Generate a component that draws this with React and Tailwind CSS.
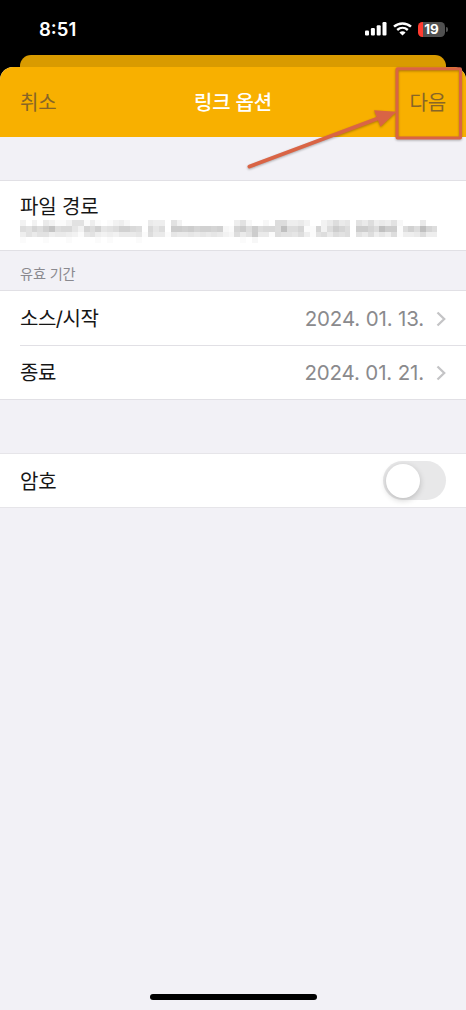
// Each digit is one cell of the blurred-out path: 0 is blank, f is darkest
const MOSAIC_ROWS = [
  '3030531137 7141013420 0054407300 0000000472 0020884453 0035856075 8454720005 00',
  '87a8be8996 3a8b678bb9 809680ccbc abbab21ac8 c8998f88a1 1a38ca80cc a8fcc18b8f a8',
  '4757745543 1674343555 6185516556 5656532857 c551877684 1785878075 8464814458 44',
  '1000100010 0001010000 1000000000 0000000010 2000000000 0000000000 0000000000 00',
];

function Mosaic() {
  return (
    <div className="flex h-[24px] w-[418px] flex-col">
      {MOSAIC_ROWS.map((row, y) => (
        <div key={y} className="flex h-[5.8px] shrink-0">
          {row.replaceAll(' ', '').split('').map((cell, x) => {
            const v = Math.round(255 - parseInt(cell, 16) * 4.2);
            return <span key={x} className="h-full w-[5.8px] shrink-0" style={{ backgroundColor: `rgb(${v},${v},${v})` }} />;
          })}
        </div>
      ))}
    </div>
  );
}

function StatusBar() {
  return (
    <div className="flex h-[55px] shrink-0 items-start justify-between pl-[39px] pr-[18px] pt-[19px] text-white">
      <span className="text-[18.5px] font-semibold leading-[20px] tracking-normal">8:51</span>
      <div className="flex h-[20px] items-center">
        <svg width="22" height="14" viewBox="0 0 22 14" fill="#fff" className="mr-[6px]">
          <rect x="0" y="8.6" width="4" height="5" rx="1.1" />
          <rect x="5.9" y="6.1" width="4" height="7.5" rx="1.1" />
          <rect x="11.7" y="3.2" width="4" height="10.4" rx="1.1" />
          <rect x="17.5" y="0.1" width="4" height="13.5" rx="1.1" />
        </svg>
        <svg width="19" height="14" viewBox="0 0 19 14" fill="none" stroke="#fff" className="mr-[6px]">
          <path d="M1 4.7C5.8 0.3 13.2 0.3 18 4.7" strokeWidth="2.5" />
          <path d="M4.2 8C7.3 5.2 11.7 5.2 14.8 8" strokeWidth="2.4" />
          <path d="M9.5 13.6L6.4 10.4C8.2 8.9 10.8 8.9 12.6 10.4Z" fill="#fff" stroke="none" />
        </svg>
        <div className="flex h-[15px] w-[27px] items-center justify-center overflow-hidden rounded-[4.5px] bg-linear-to-r from-[#ff3b30] from-[20%] to-[#505050] to-[20%]">
          <span className="text-[13.5px] font-bold leading-[15px]">19</span>
        </div>
        <span className="ml-px h-[5px] w-[2px] rounded-r-full bg-[#505050]" />
      </div>
    </div>
  );
}

function DateRow({ label, value }) {
  return (
    <div className="flex flex-1 items-center justify-between pt-[2px]">
      <span className="tracking-[-0.5px]">{label}</span>
      <div className="flex items-center pr-[20px]">
        <span className="text-[20.5px] tracking-[-0.15px] text-[#8a8a8d]">{value}</span>
        <svg width="10" height="16" viewBox="0 0 10 16" fill="none" className="ml-[12px]">
          <path d="M1.5 1.5L8.2 8L1.5 14.5" stroke="#c4c4c6" strokeWidth="2.3" />
        </svg>
      </div>
    </div>
  );
}

// Callout drawn over the "next" button
function Callout() {
  return (
    <svg
      width="466"
      height="180"
      viewBox="0 0 466 180"
      className="pointer-events-none absolute left-0 top-0 drop-shadow-[0_1px_1px_rgba(0,0,0,0.3)]"
    >
      <rect x="397" y="68.8" width="63.5" height="69.2" rx="0.5" fill="none" stroke="#d96445" strokeWidth="3" />
      <path d="M249.5 166.5L379 118" stroke="#d96445" strokeWidth="4" strokeLinecap="round" />
      <path d="M374 110.3L396.5 111.8L380.5 126.7Z" fill="#d96445" />
    </svg>
  );
}

export default function App() {
  return (
    <div className="relative flex h-[1010px] w-[466px] flex-col overflow-hidden bg-black font-['Inter','Noto_Sans_CJK_KR',sans-serif] text-[20px] leading-[28px] tracking-[-0.15px] text-[#161616]">
      <StatusBar />
      <div className="mx-[20px] h-[12px] shrink-0 rounded-t-[11px] bg-[#d99b00]" />

      <div className="flex flex-1 flex-col overflow-hidden rounded-t-[13px] bg-[#f2f1f6]">
        <header className="grid h-[70px] shrink-0 grid-cols-3 items-center bg-[#f8b000] px-[20px] pt-[2px]">
          <span className="text-[#876527]">취소</span>
          <span className="text-center font-medium text-white">링크 옵션</span>
          <span className="text-right text-[#876527]">다음</span>
        </header>

        <section className="mt-[43px] h-[71px] shrink-0 border-y border-[#e1e0e5] bg-white pl-[20px] pt-[13px]">
          <div className="leading-[26px]">파일 경로</div>
          <Mosaic />
        </section>

        <h2 className="flex h-[39px] shrink-0 items-center pt-[6px] text-[14.2px] text-[#8a898f]">
          <span className="pl-[20px]">유효 기간</span>
        </h2>

        <section className="flex h-[110px] shrink-0 flex-col border-y border-[#e1e0e5] bg-white pl-[20px]">
          <DateRow label="소스/시작" value="2024. 01. 13." />
          <div className="h-px bg-[#e1e0e5]" />
          <DateRow label="종료" value="2024. 01. 21." />
        </section>

        <section className="mt-[53px] flex h-[55px] shrink-0 items-center justify-between border-y border-[#e6e5e9] bg-white px-[20px]">
          <span className="pt-[2px]">암호</span>
          <div className="flex h-[39px] w-[63px] items-center rounded-full bg-[#e8e8e9] p-[2.5px]">
            <div className="size-[34px] rounded-full bg-white shadow-[0_2px_6px_rgba(0,0,0,0.2)]" />
          </div>
        </section>

        <div className="mb-[10px] mt-auto h-[6px] w-[167px] shrink-0 self-center rounded-full bg-black" />
      </div>

      <Callout />
    </div>
  );
}
